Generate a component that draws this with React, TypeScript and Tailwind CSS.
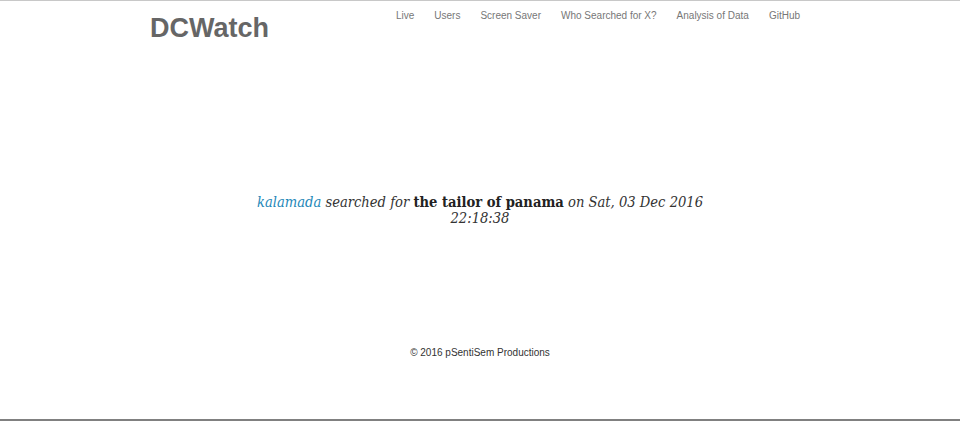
import React from 'react';

const navItems = ['Live', 'Users', 'Screen Saver', 'Who Searched for X?', 'Analysis of Data', 'GitHub'];

export default function App() {
  return (
    <div className="h-[421px] flex flex-col bg-white border-t border-[#c8c8c8] border-b-2 border-b-[#808080] font-['Liberation_Sans',Arial,sans-serif]">
      {/* Header */}
      <header className="flex items-start pl-[150px] pr-[160px]">
        <h1 className="text-[27px] font-bold text-[#666] leading-none mt-[14px]">DCWatch</h1>
        <nav className="ml-auto flex gap-[20px] mt-[8px] text-[10px] text-[#777] leading-[14px]">
          {navItems.map((item) => (
            <a key={item} href="#">{item}</a>
          ))}
        </nav>
      </header>

      {/* Latest search */}
      <main className="flex-1 flex flex-col items-center">
        <p className="mt-[152px] w-[470px] text-center text-[14.6px] leading-[16px] italic text-[#333] font-['DejaVu_Serif_Condensed','DejaVu_Serif',serif]">
          <span className="text-[#1e88b8]">kalamada</span> searched for{' '}
          <span className="not-italic font-bold text-[#222]">the tailor of panama</span> on Sat, 03 Dec 2016 22:18:38
        </p>
      </main>

      {/* Footer */}
      <footer className="text-center text-[10px] text-[#333] mb-[59px]">© 2016 pSentiSem Productions</footer>
    </div>
  );
}
